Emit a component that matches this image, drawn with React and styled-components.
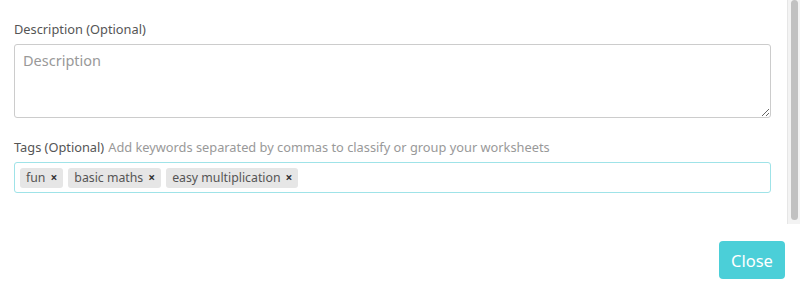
import React from "react";
import styled, { createGlobalStyle } from "styled-components";

const Global = createGlobalStyle`
  html, body { margin: 0; padding: 0; background: #fff; }
  body { font-family: "Noto Sans", Lato, sans-serif; color: #555; }
  * { box-sizing: border-box; }
`;

const Modal = styled.div`
  width: 800px;
  height: 294px;
  display: flex;
  flex-direction: column;
  background: #fff;
`;

const Body = styled.div`
  height: 224px;
  display: flex;
  overflow: hidden;
`;

const ScrollTrack = styled.div`
  width: 13px;
  flex: none;
  background: #f3f3f3;
  border-left: 1px solid #e6e6e6;
  padding: 0 2px 4px 3px;
  display: flex;
`;

const ScrollThumb = styled.div`
  flex: 1;
  background: #c1c1c1;
  border-radius: 4px;
`;

const Content = styled.div`
  flex: 1;
  padding: 20px 16px 35px 14px;
  display: flex;
  flex-direction: column;
`;

const Field = styled.div`
  display: flex;
  flex-direction: column;
  margin-bottom: ${(p) => p.$mb || 0}px;
`;

const Label = styled.label`
  font-size: 12.8px;
  line-height: 18px;
  color: #555;
  margin-bottom: 6px;
`;

const Hint = styled.span`
  color: #999;
  margin-left: 4px;
`;

const TextArea = styled.textarea`
  height: 74px;
  width: 100%;
  border: 1px solid #ccc;
  border-radius: 3px;
  padding: 5px 8px;
  font-family: inherit;
  font-size: 14.5px;
  color: #555;
  resize: vertical;
  outline: none;
  &::placeholder { color: #999; }
`;

const TagBox = styled.div`
  height: 31px;
  border: 1px solid #9fe3e8;
  border-radius: 3px;
  display: flex;
  align-items: center;
  gap: 5px;
  padding: 0 5px;
`;

const Tag = styled.span`
  display: inline-flex;
  align-items: center;
  height: 20px;
  padding: 0 6px;
  background: #e6e6e6;
  border-radius: 3px;
  font-size: 12.3px;
  color: #555;
`;

const Remove = styled.span`
  font-size: 12px;
  font-weight: 700;
  color: #333;
  margin-left: 5px;
`;

const Footer = styled.div`
  flex: 1;
  display: flex;
  justify-content: flex-end;
  align-items: flex-start;
  padding: 17px 15px 0 0;
`;

const Button = styled.button`
  width: 66px;
  height: 38px;
  border: none;
  border-radius: 4px;
  background: #4bcfd8;
  color: #fff;
  font-family: inherit;
  font-size: 16.5px;
  cursor: pointer;
`;

const tags = ["fun", "basic maths", "easy multiplication"];

export default function App() {
  return (
    <>
      <Global />
      <Modal>
        <Body>
          <Content>
            <Field $mb={20}>
              <Label>Description (Optional)</Label>
              <TextArea placeholder="Description" />
            </Field>
            <Field>
              <Label>
                Tags (Optional)
                <Hint>Add keywords separated by commas to classify or group your worksheets</Hint>
              </Label>
              <TagBox>
                {tags.map((t) => (
                  <Tag key={t}>
                    {t}
                    <Remove>×</Remove>
                  </Tag>
                ))}
              </TagBox>
            </Field>
          </Content>
          <ScrollTrack>
            <ScrollThumb />
          </ScrollTrack>
        </Body>
        <Footer>
          <Button>Close</Button>
        </Footer>
      </Modal>
    </>
  );
}
